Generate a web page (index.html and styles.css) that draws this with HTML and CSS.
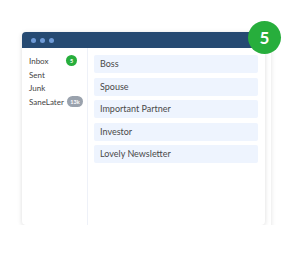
FILE: index.html
```html
<!DOCTYPE html>
<html lang="en">
<head>
  <meta charset="UTF-8">
  <title>SaneBox</title>
  <link rel="stylesheet" href="styles.css">
</head>
<body>
  <section class="stage">
    <div class="frame">
      <div class="back-card"></div>
      <div class="window">
        <div class="titlebar">
          <span class="dot"></span>
          <span class="dot"></span>
          <span class="dot"></span>
        </div>
        <div class="body">
          <ul class="folders">
            <li><span>Inbox</span><span class="badge badge-green">5</span></li>
            <li><span>Sent</span></li>
            <li><span>Junk</span></li>
            <li><span>SaneLater</span><span class="badge badge-grey">13k</span></li>
          </ul>
          <ul class="messages">
            <li>Boss</li>
            <li>Spouse</li>
            <li>Important Partner</li>
            <li>Investor</li>
            <li>Lovely Newsletter</li>
          </ul>
        </div>
      </div>
      <div class="count">5</div>
    </div>
  </section>
</body>
</html>
```

FILE: styles.css
```css
/* page */
body {
  margin: 0;
  font-family: Lato, "Open Sans", sans-serif;
  background-color: #ffffff;
  color: #4a4a4a;
}
.stage {
  padding: 32px 0 0 22px;
}
.frame {
  position: relative;
  width: 243px;
  height: 193px;
}
/* the second card behind the window */
.back-card {
  position: absolute;
  left: 6px;
  top: 6px;
  width: 243px;
  height: 193px;
  background-color: #fff;
  border-radius: 4px;
  box-shadow: 0 1px 5px rgba(0, 0, 0, 0.12);
}
.window {
  position: relative;
  height: 100%;
  display: flex;
  flex-direction: column;
  background-color: #fff;
  border-radius: 4px;
  overflow: hidden;
  box-shadow: 0 1px 5px rgba(0, 0, 0, 0.14);
}
.titlebar {
  height: 16px;
  flex: none;
  background-color: #264a72;
  display: flex;
  align-items: center;
  gap: 4px;
  padding-left: 9px;
}
.dot {
  width: 5px;
  height: 5px;
  border-radius: 50%;
  background-color: #6f9ad6;
}
.body {
  flex: 1;
  display: flex;
}
.folders {
  list-style: none;
  margin: 0;
  padding: 6px 4px 0 7px;
  width: 66px;
  box-sizing: border-box;
  border-right: 1px solid #eef1f8;
  font-size: 8px;
  color: #444;
}
.folders li {
  height: 13.7px;
  display: flex;
  align-items: center;
  justify-content: space-between;
}
.badge {
  display: inline-flex;
  align-items: center;
  justify-content: center;
  height: 11px;
  border-radius: 6px;
  color: #fff;
  font-size: 5.5px;
  font-weight: 700;
}
.badge-green {
  width: 11px;
  margin-right: 6px;
  background-color: #27ae3c;
}
.badge-grey {
  width: 16px;
  background-color: #9aa2ad;
}
.messages {
  list-style: none;
  margin: 0;
  padding: 7px 7px 0 6px;
  flex: 1;
  display: flex;
  flex-direction: column;
  gap: 4.5px;
}
.messages li {
  height: 18px;
  line-height: 18px;
  padding-left: 6px;
  border-radius: 2px;
  background-color: #eef4fe;
  font-size: 9px;
  color: #4a4a4a;
}
/* counter bubble on the corner */
.count {
  position: absolute;
  left: 226px;
  top: -11px;
  width: 33px;
  height: 33px;
  border-radius: 50%;
  background-color: #27ae3c;
  color: #fff;
  font-size: 17px;
  font-weight: 700;
  display: flex;
  align-items: center;
  justify-content: center;
}
```
